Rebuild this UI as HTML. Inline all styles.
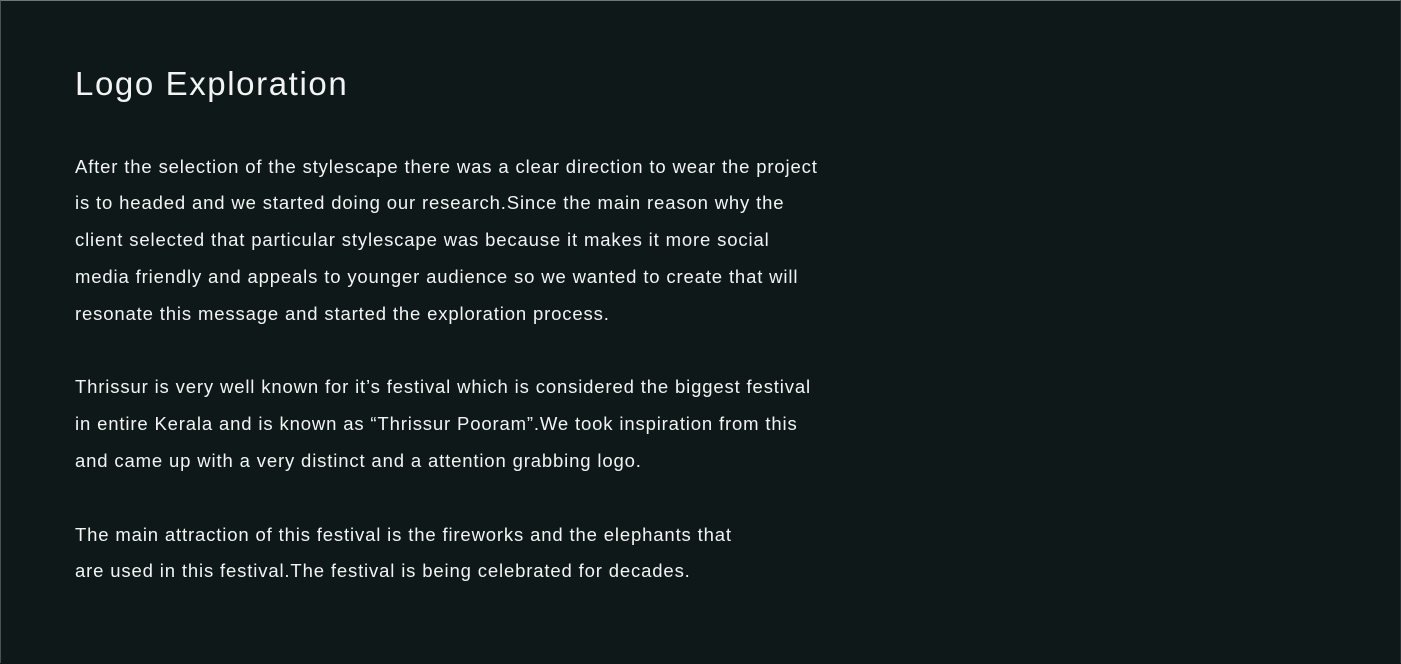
<!DOCTYPE html>
<html><head><meta charset="utf-8"><style>
html,body{margin:0;padding:0}
body{width:1401px;height:664px;background:#0e1819;position:relative;overflow:hidden;font-family:"Liberation Sans",sans-serif;color:#f2f4f4}
.frame{position:absolute;left:0;top:0;width:1399px;height:662px;border-top:1px solid #6e7676;border-left:1px solid #4a5252;border-right:1px solid #2a3333}
h1{position:absolute;left:75px;top:64px;margin:0;font-weight:normal;font-size:33px;line-height:40px;letter-spacing:1.6px}
.l{position:absolute;left:75px;white-space:nowrap;font-size:18.5px;line-height:24px;letter-spacing:0.85px}
</style></head><body>
<div class="frame"></div>
<h1>Logo Exploration</h1>
<div class="l" style="top:155px">After the selection of the stylescape there was a clear direction to wear the project</div>
<div class="l" style="top:191px">is to headed and we started doing our research.Since the main reason why the</div>
<div class="l" style="top:228px">client selected that particular stylescape was because it makes it more social</div>
<div class="l" style="top:265px">media friendly and appeals to younger audience so we wanted to create that will</div>
<div class="l" style="top:302px">resonate this message and started the exploration process.</div>
<div class="l" style="top:375px">Thrissur is very well known for it’s festival which is considered the biggest festival</div>
<div class="l" style="top:412px">in entire Kerala and is known as “Thrissur Pooram”.We took inspiration from this</div>
<div class="l" style="top:449px">and came up with a very distinct and a attention grabbing logo.</div>
<div class="l" style="top:523px">The main attraction of this festival is the fireworks and the elephants that</div>
<div class="l" style="top:559px">are used in this festival.The festival is being celebrated for decades.</div>
</body></html>
